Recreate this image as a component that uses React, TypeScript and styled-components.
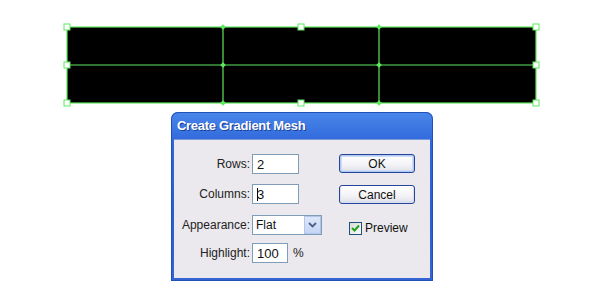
import React from "react";
import styled, { createGlobalStyle } from "styled-components";

const Global = createGlobalStyle`
  html, body { margin: 0; padding: 0; background: #ffffff; }
  body { width: 590px; height: 303px; overflow: hidden; font-family: "Liberation Sans", Arial, sans-serif; }
`;

const Page = styled.div`
  display: flex;
  flex-direction: column;
  width: 590px;
  height: 303px;
`;

const MeshArea = styled.svg`
  display: block;
  margin: 22px 0 0 62px;
`;

const Dialog = styled.div`
  margin: 4px 0 0 171px;
  width: 262px;
  height: 169px;
  display: flex;
  flex-direction: column;
  border-radius: 7px 7px 0 0;
  box-sizing: border-box;
  padding: 0 3px 3px 3px;
  background: linear-gradient(180deg, #4a86ea 0%, #2f68da 18%, #2a5fd2 60%, #3465d2 100%);
  box-shadow: inset 0 0 0 1px #2152b8;
`;

const TitleBar = styled.div`
  height: 27px;
  display: flex;
  align-items: center;
  padding-left: 3px;
  color: #ffffff;
  font-weight: bold;
  font-size: 13px;
  font-family: "Liberation Sans", Arial, sans-serif;
  letter-spacing: -0.3px;
  text-shadow: 1px 1px 0 #1a3f99;
`;

const Body = styled.div`
  flex: 1;
  background: #ebe9ed;
  display: flex;
  padding: 14px 0 0 0;
  border-top: 1px solid #7d9ad6;
`;

const Form = styled.div`
  display: flex;
  flex-direction: column;
  width: 163px;
`;

const Row = styled.div<{ $gap: number }>`
  display: flex;
  align-items: center;
  height: 20px;
  margin-bottom: ${(p) => p.$gap}px;
`;

const Label = styled.label`
  width: 78px;
  text-align: right;
  font-size: 12px;
  color: #222;
  padding-right: 2px;
  box-sizing: border-box;
`;

const Input = styled.div<{ $w: number }>`
  width: ${(p) => p.$w}px;
  height: 20px;
  box-sizing: border-box;
  background: #fff;
  border: 1px solid #7f9db9;
  font-size: 13px;
  padding-left: 4px;
  display: flex;
  align-items: center;
  color: #111;
`;

const Caret = styled.span`
  display: inline-block;
  width: 1px;
  height: 13px;
  background: #000;
  margin-right: -1px;
`;

const Select = styled.div`
  width: 70px;
  height: 20px;
  box-sizing: border-box;
  background: #fff;
  border: 1px solid #7f9db9;
  display: flex;
  align-items: center;
  font-size: 12px;
  padding-left: 3px;
  color: #111;
`;

const SelectText = styled.span`
  flex: 1;
`;

const Arrow = styled.div`
  width: 17px;
  height: 18px;
  box-sizing: border-box;
  background: linear-gradient(180deg, #dde7fb 0%, #c5d5f5 100%);
  border: 1px solid #b3c5ea;
  display: flex;
  align-items: center;
  justify-content: center;
`;

const Suffix = styled.span`
  font-size: 12px;
  margin-left: 5px;
  color: #222;
`;

const Side = styled.div`
  display: flex;
  flex-direction: column;
  padding-left: 2px;
`;

const Button = styled.div<{ $gap: number; $default?: boolean }>`
  width: 76px;
  height: 19px;
  box-sizing: border-box;
  border: 1px solid #24459a;
  border-radius: 3px;
  background: linear-gradient(180deg, #ffffff 0%, #f4f4f7 55%, #dfdfe8 100%);
  box-shadow: ${(p) =>
    p.$default ? "inset 0 0 0 1px #b2c9f2, inset 0 0 0 2px #cddcf7" : "inset 0 -1px 0 1px #dadfee"};
  font-size: 12px;
  display: flex;
  align-items: center;
  justify-content: center;
  color: #111;
  margin-bottom: ${(p) => p.$gap}px;
`;

const CheckRow = styled.div`
  display: flex;
  align-items: center;
  margin-left: 10px;
  font-size: 12px;
  color: #111;
`;

const Box = styled.div`
  width: 13px;
  height: 13px;
  box-sizing: border-box;
  border: 1px solid #1c5180;
  background: linear-gradient(135deg, #dcdcd6 0%, #fafaf8 100%);
  margin-right: 3px;
  display: flex;
  align-items: center;
  justify-content: center;
`;

const G = "#5fe85f";

function Mesh() {
  const x0 = 5, x1 = 161, x2 = 317, x3 = 474;
  const y0 = 5, y1 = 43, y2 = 81;
  const handles = [
    [x0, y0], [239, y0], [x3, y0],
    [x0, y1], [x3, y1],
    [x0, y2], [239, y2], [x3, y2],
  ];
  const points = [
    [x1, y0], [x2, y0], [x1, y1], [x2, y1], [x1, y2], [x2, y2],
  ];
  return (
    <MeshArea width="480" height="86" viewBox="0 0 480 86">
      <rect x={x0} y={y0} width={x3 - x0} height={y2 - y0} fill="#000" stroke={G} strokeWidth="1.2" />
      <line x1={x1} y1={y0} x2={x1} y2={y2} stroke={G} strokeWidth="1.2" />
      <line x1={x2} y1={y0} x2={x2} y2={y2} stroke={G} strokeWidth="1.2" />
      <line x1={x0} y1={y1} x2={x3} y2={y1} stroke={G} strokeWidth="1.2" />
      {points.map(([x, y], i) => (
        <rect key={"p" + i} x={x - 2} y={y - 2} width="4" height="4" fill={G} transform={`rotate(45 ${x} ${y})`} />
      ))}
      {handles.map(([x, y], i) => (
        <rect key={"h" + i} x={x - 3} y={y - 3} width="6" height="6" fill="#fff" stroke={G} strokeWidth="1" />
      ))}
    </MeshArea>
  );
}

export default function App() {
  return (
    <>
      <Global />
      <Page>
        <Mesh />
        <Dialog>
          <TitleBar>Create Gradient Mesh</TitleBar>
          <Body>
            <Form>
              <Row $gap={10}>
                <Label>Rows:</Label>
                <Input $w={47}>2</Input>
              </Row>
              <Row $gap={11}>
                <Label>Columns:</Label>
                <Input $w={47}>
                  <Caret />3
                </Input>
              </Row>
              <Row $gap={8}>
                <Label>Appearance:</Label>
                <Select>
                  <SelectText>Flat</SelectText>
                  <Arrow>
                    <svg width="9" height="6" viewBox="0 0 9 6">
                      <path d="M1 1 L4.5 4.5 L8 1" fill="none" stroke="#4d6185" strokeWidth="1.8" />
                    </svg>
                  </Arrow>
                </Select>
              </Row>
              <Row $gap={0}>
                <Label>Highlight:</Label>
                <Input $w={36}>100</Input>
                <Suffix>%</Suffix>
              </Row>
            </Form>
            <Side>
              <Button $gap={12} $default>OK</Button>
              <Button $gap={17}>Cancel</Button>
              <CheckRow>
                <Box>
                  <svg width="9" height="8" viewBox="0 0 9 8">
                    <path d="M1 4 L3.5 6.5 L8 1.5" fill="none" stroke="#21a121" strokeWidth="2" />
                  </svg>
                </Box>
                Preview
              </CheckRow>
            </Side>
          </Body>
        </Dialog>
      </Page>
    </>
  );
}
